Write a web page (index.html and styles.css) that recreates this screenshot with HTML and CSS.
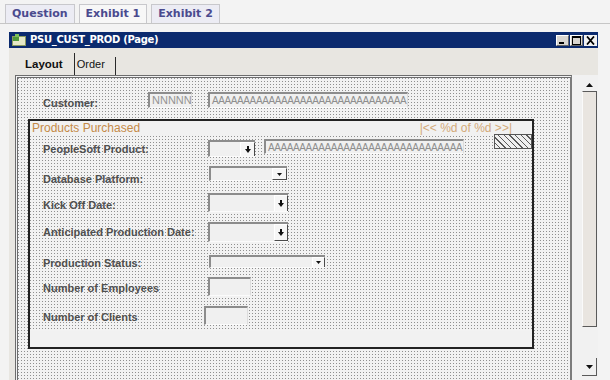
FILE: index.html
```html
<!DOCTYPE html>
<html>
<head>
<meta charset="utf-8">
<link rel="stylesheet" href="styles.css">
</head>
<body>
<div class="tabs">
  <div class="tab">Question</div>
  <div class="tab active">Exhibit 1</div>
  <div class="tab">Exhibit 2</div>
</div>
<div class="window">
  <div class="titlebar">
    <svg class="appicon" width="14" height="12" viewBox="0 0 14 12"><rect x="0.5" y="2.5" width="13" height="9" fill="#e6e8c8" stroke="#8a9a60"/><rect x="1" y="3" width="6" height="4" fill="#4f9a3a"/><path d="M3 0h4v3H3z" fill="#7cc05a"/></svg>
    <span class="title">PSU_CUST_PROD (Page)</span>
    <div class="winbtns">
      <span class="wbtn"><svg width="11" height="9" viewBox="0 0 11 9"><rect x="2" y="6" width="5" height="2" fill="#000"/></svg></span>
      <span class="wbtn"><svg width="11" height="9" viewBox="0 0 11 9"><rect x="1.5" y="0.5" width="8" height="8" fill="none" stroke="#000"/><rect x="1" y="0" width="9" height="2" fill="#000"/></svg></span>
      <span class="wbtn close"><svg width="11" height="9" viewBox="0 0 11 9"><path d="M2 0.5l7 8M9 0.5l-7 8" stroke="#000" stroke-width="1.8"/></svg></span>
    </div>
  </div>
  <div class="winbody">
    <div class="pagetabs">
      <span class="ptab active">Layout</span>
      <span class="ptab">Order</span>
    </div>
    <div class="workarea">
      <div class="canvas">
        <div class="cust-row">
          <span class="lbl">Customer:</span>
          <span class="field f-nnn">NNNNN</span>
          <span class="field f-aaa">AAAAAAAAAAAAAAAAAAAAAAAAAAAAAAA</span>
        </div>
        <div class="group">
          <div class="group-head">
            <span class="gtitle">Products Purchased</span>
            <span class="gnav">|&lt;&lt; %d of %d &gt;&gt;|</span>
          </div>
          <div class="hatch"></div>
          <div class="group-body">
            <div class="row r1">
              <span class="lbl">PeopleSoft Product:</span>
              <span class="field combo c1"><span class="dbtn prompt"><svg width="6" height="7" viewBox="0 0 6 7"><path d="M2 0h2v3h2L3 7 0 3h2z" fill="#111"/></svg></span></span>
              <span class="field f-aaa f-aaa2">AAAAAAAAAAAAAAAAAAAAAAAAAAAAAAA</span>
            </div>
            <div class="row r2">
              <span class="lbl">Database Platform:</span>
              <span class="field combo c2"><span class="dbtn drop"><svg width="5" height="3" viewBox="0 0 5 3"><path d="M0 0h5L2.5 3z" fill="#111"/></svg></span></span>
            </div>
            <div class="row r3">
              <span class="lbl">Kick Off Date:</span>
              <span class="field combo c3"><span class="dbtn prompt tall"><svg width="6" height="7" viewBox="0 0 6 7"><path d="M2 0h2v3h2L3 7 0 3h2z" fill="#111"/></svg></span></span>
            </div>
            <div class="row r4">
              <span class="lbl">Anticipated Production Date:</span>
              <span class="field combo c4"><span class="dbtn prompt tall"><svg width="6" height="7" viewBox="0 0 6 7"><path d="M2 0h2v3h2L3 7 0 3h2z" fill="#111"/></svg></span></span>
            </div>
            <div class="row r5">
              <span class="lbl">Production Status:</span>
              <span class="field combo c5"><span class="dbtn drop"><svg width="5" height="3" viewBox="0 0 5 3"><path d="M0 0h5L2.5 3z" fill="#111"/></svg></span></span>
            </div>
            <div class="row r6">
              <span class="lbl">Number of Employees</span>
              <span class="field c6"></span>
            </div>
            <div class="row r7">
              <span class="lbl">Number of Clients</span>
              <span class="field c7"></span>
            </div>
          </div>
          <div class="group-foot"></div>
        </div>
      </div>
      <div class="vscroll">
        <div class="sb-up"><svg width="7" height="4" viewBox="0 0 7 4"><path d="M0 4h7L3.5 0z" fill="#111"/></svg></div>
        <div class="sb-thumb"></div>
        <div class="sb-space"></div>
        <div class="sb-down"><svg width="7" height="4" viewBox="0 0 7 4"><path d="M0 0h7L3.5 4z" fill="#111"/></svg></div>
      </div>
    </div>
  </div>
</div>
</body>
</html>
```

FILE: styles.css
```css
* { box-sizing: border-box; }
html, body { margin: 0; padding: 0; }
body {
  width: 610px;
  height: 380px;
  overflow: hidden;
  background: #f3f3f3;
  font-family: "Liberation Sans", Arial, sans-serif;
}

/* top exhibit tabs */
.tabs {
  display: flex;
  gap: 4px;
  height: 24px;
  padding: 4px 0 0 5px;
  border-bottom: 1px solid #c6c6c6;
}
.tab {
  height: 19px;
  padding: 0 6px;
  border: 1px solid #c8c8cc;
  border-bottom: none;
  background: #ececf4;
  color: #4a4a8e;
  font: bold 11px/18px "DejaVu Sans", Verdana, sans-serif;
}
.tab.active { background: #f7f7f7; }

/* window */
.window {
  margin: 8px 0 0 9px;
  width: 589px;
}
.titlebar {
  height: 16px;
  background: #0b2a6e;
  display: flex;
  align-items: center;
  padding-left: 3px;
}
.appicon { flex: none; }
.title {
  margin-left: 4px;
  color: #fff;
  font: bold 10px/16px "DejaVu Sans", Verdana, sans-serif;
  letter-spacing: -0.3px;
}
.winbtns {
  margin-left: auto;
  display: flex;
  gap: 1px;
  padding-right: 1px;
}
.wbtn {
  width: 13px;
  height: 11px;
  background: #d8d5d0;
  border: 1px solid #fff;
  border-right-color: #666;
  border-bottom-color: #666;
  display: flex;
  align-items: center;
  justify-content: center;
}
.wbtn.close { background: #f2f2f2; border-color: #f2f2f2; }

.winbody {
  background: #e8e6e1;
  height: 332px;
}
.pagetabs {
  height: 27px;
  display: flex;
  align-items: flex-end;
  padding-left: 16px;
}
.ptab {
  font: 11px "Liberation Sans", Arial, sans-serif;
  color: #111;
  border-right: 1px solid #2a2a2a;
}
.ptab.active {
  font-weight: bold;
  font-size: 11.5px;
  line-height: 22px;
  padding-right: 11px;
}
.ptab + .ptab {
  line-height: 14px;
  padding: 0 10px 4px 2px;
}

.workarea {
  display: flex;
  height: 305px;
  margin-left: 6px;
}
.canvas {
  width: 557px;
  height: 305px;
  border-left: 3px double #6c6c6c;
  border-top: 3px double #6c6c6c;
  border-right: 2px solid #7c7c7c;
  padding: 14px 0 0 10px;
  background-color: #f2f2f2;
  background-image: conic-gradient(from 270deg at 1px 1px, #8f8f8f 90deg, transparent 0);
  background-size: 3px 3px;
}
.lbl {
  flex: none;
  font: bold 11px/12px "Liberation Sans", Arial, sans-serif;
  color: #505050;
}
.cust-row {
  display: flex;
  align-items: flex-start;
  height: 17px;
  padding-left: 15px;
}
.cust-row .lbl { width: 105px; margin-top: 5px; }

.field {
  flex: none;
  display: block;
  background: #f0f0f0;
  border-top: 2px solid #8c8c8c;
  border-left: 2px solid #8c8c8c;
  border-right: 1px solid #dcdcdc;
  border-bottom: 1px solid #fbfbfb;
  overflow: hidden;
  white-space: nowrap;
  color: #949494;
  font: 11px/13px "Liberation Sans", Arial, sans-serif;
  padding-left: 2px;
}
.f-nnn { width: 44px; height: 16px; }
.f-aaa {
  width: 200px;
  height: 16px;
  margin-left: 16px;
  font-size: 10px;
  letter-spacing: -0.4px;
  color: #8e8e8e;
}

/* group box */
.group {
  position: relative;
  margin-top: 10px;
  width: 506px;
  height: 230px;
  border: 2px solid #222;
  background: #f1f1f1;
  display: flex;
  flex-direction: column;
}
.group-head {
  height: 15px;
  display: flex;
  justify-content: space-between;
  padding: 0 20px 0 2px;
  font: 12px/15px "Liberation Sans", Arial, sans-serif;
}
.gtitle { color: #c48a48; }
.gnav { color: #d3aa7a; }
.hatch {
  position: absolute;
  right: 0;
  top: 13px;
  width: 38px;
  height: 15px;
  border: 1px solid #555;
  background: repeating-linear-gradient(45deg, #efefef 0 3px, #5a5a5a 3px 4px);
}
.group-body {
  height: 195px;
  padding: 4px 0 0 13px;
  background-color: #f2f2f2;
  background-image: conic-gradient(from 270deg at 1px 1px, #8f8f8f 90deg, transparent 0);
  background-size: 3px 3px;
}
.group-foot { flex: 1; }

.row {
  display: flex;
  align-items: flex-start;
}
.row .lbl { width: 165px; }
.r1 { height: 26px; }
.r1 .lbl { margin-top: 3px; }
.r2 { height: 27px; }
.r2 .lbl { margin-top: 7px; }
.r3 { height: 29px; }
.r3 .lbl { margin-top: 6px; }
.r4 { height: 33px; }
.r4 .lbl { margin-top: 4px; }
.r5 { height: 22px; }
.r5 .lbl { margin-top: 2px; }
.r6 { height: 29px; }
.r6 .lbl { margin-top: 5px; }
.r7 { height: 25px; }
.r7 .lbl { margin-top: 5px; }

.combo {
  display: flex;
  justify-content: flex-end;
  align-items: flex-start;
  padding: 0;
  border-right: none;
}
.dbtn {
  display: flex;
  align-items: center;
  justify-content: center;
  background: #f6f6f6;
  border: 1px solid #fff;
  border-right-color: #4a4a4a;
  border-bottom-color: #4a4a4a;
}
.c1 { width: 47px; height: 17px; }
.c1 .dbtn { width: 15px; height: 15px; }
.f-aaa2 { margin-left: 9px; margin-top: -1px; height: 15px; }
.c2 { width: 78px; height: 15px; margin-left: 1px; }
.c2 .dbtn { width: 15px; height: 12px; }
.c3, .c4 { width: 80px; height: 19px; }
.c4 { height: 20px; }
.c3 .dbtn, .c4 .dbtn { width: 14px; height: 17px; }
.c5 { width: 116px; height: 13px; margin-left: 1px; }
.c5 .dbtn { width: 13px; height: 11px; }
.c6 { width: 43px; height: 19px; }
.c7 { width: 44px; height: 19px; margin-left: -4px; }

/* vertical scrollbar */
.vscroll {
  width: 26px;
  height: 305px;
  background: #f1f1f1;
  display: flex;
  flex-direction: column;
}
.sb-up {
  height: 16px;
  display: flex;
  align-items: center;
  justify-content: center;
  padding-left: 8px;
  padding-top: 4px;
}
.sb-thumb {
  height: 236px;
  width: 15px;
  margin-left: 10px;
  background: #e9e5e0;
  border-top: 1px solid #5a5a5a;
  border-right: 1px solid #5a5a5a;
  border-bottom: 1px solid #5a5a5a;
  border-left: 1px solid #fafafa;
}
.sb-space { flex: 1; }
.sb-down {
  height: 18px;
  width: 15px;
  margin-left: 10px;
  margin-bottom: 4px;
  border-right: 1px solid #5a5a5a;
  border-bottom: 1px solid #5a5a5a;
  display: flex;
  align-items: center;
  justify-content: center;
}
```
